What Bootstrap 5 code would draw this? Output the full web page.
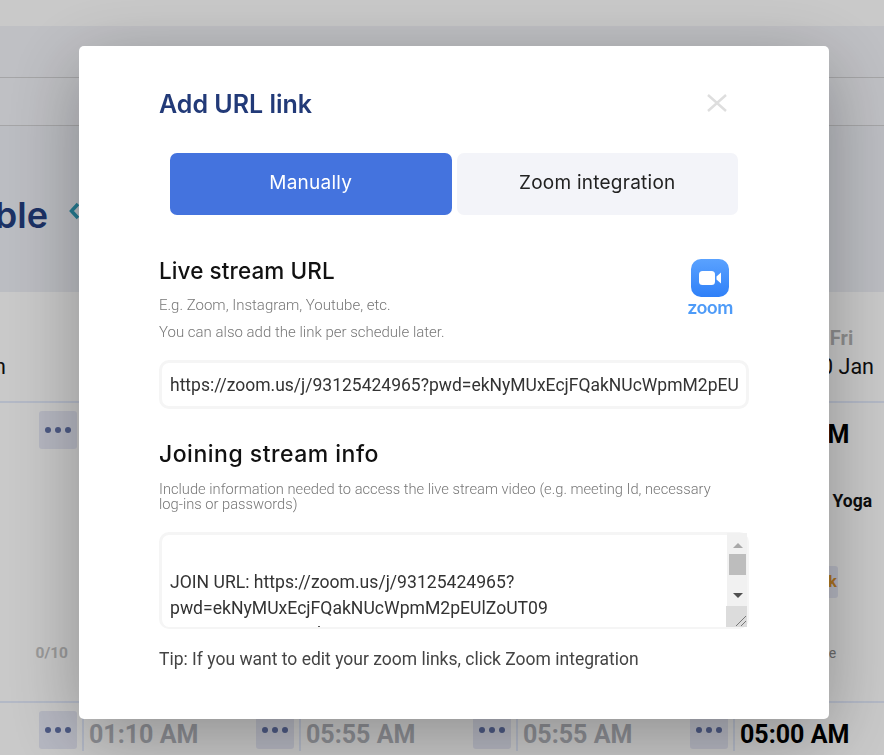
<!DOCTYPE html>
<html lang="en">
<head>
    <meta charset="UTF-8">
    <title>Add URL link</title>
    <link href="https://cdn.jsdelivr.net/npm/bootstrap@5.3.0/dist/css/bootstrap.min.css" rel="stylesheet">
    <style>
        body { font-family: Roboto, sans-serif; overflow: hidden; height: 755px; background: #fff; }
        .wide-page { width: 1100px; margin-left: -135px; }
        .top-strip { height: 26px; background: #fff; }
        .band-a { height: 52px; background: #f3f4f9; border-bottom: 1px solid #d2d2d4; }
        .band-b { height: 48px; background: #f3f4f9; border-bottom: 1px solid #d2d2d4; }
        .title-band { height: 166px; background: #eef0f6; padding-top: 65px; }
        .page-title { width: 183px; font: 600 36px/48px Inter, sans-serif; color: #243f80; text-align: right; white-space: nowrap; overflow: hidden; direction: rtl; }
        .week-nav { margin: 11px 0 0 21px; }
        .head-row { height: 111px; border-bottom: 2px solid #e4ebfc; }
        .body-row { height: 300px; border-bottom: 2px solid #e4ebfc; }
        .cell-first { width: 217px; flex: none; }
        .cell-day { width: 217px; flex: none; padding-left: 5px; border-left: 2px solid #e4ebfc; }
        .head-cell { width: 217px; flex: none; padding-top: 33px; text-align: center; }
        .day-name { font: 700 20px/26px Roboto, sans-serif; color: #b5b5b5; min-height: 26px; }
        .day-date { font: 400 21.5px/30px Roboto, sans-serif; color: #111; margin-top: 1px; }
        .dots-btn { width: 38px; height: 38px; margin-top: 8px; background: #e7e9f6; border-radius: 3px; border: 0; padding: 0; gap: 4px; }
        .dots-btn i { width: 6px; height: 6px; border-radius: 50%; background: #6272a8; }
        .dots-slot { justify-content: flex-end; padding-right: 5px; }
        .time-text { font: 700 25px/32px Roboto, sans-serif; color: #b4b6bd; }
        .time-now { color: #000; }
        .spots-text { font: 700 15.5px/18px Roboto, sans-serif; color: #c4c4c4; margin: 195px 14px 0 0; text-align: right; }
        .class-name { font: 700 17.5px/20px Roboto, sans-serif; color: #111; margin: 40px 0 0 60px; white-space: nowrap; }
        .book-chip { width: fit-content; background: #e7e9f6; color: #d9902a; font: 700 16px/32px Roboto, sans-serif; padding: 0 1px 0 4px; border-radius: 3px; margin: 55px 0 0 56px; }
        .note-text { font-size: 14px; line-height: 21px; color: #888; margin: 45px 0 0 40px; }

        .modal-backdrop { --bs-backdrop-opacity: .21; }
        .url-dialog { --bs-modal-width: 750px; margin: 46px 0 0 79px; }
        .url-box { height: 673px; border: 0; border-radius: 5px; padding: 42px 80px 0; box-shadow: 0 18px 75px rgba(0,0,0,.3); }
        .url-title { font: 600 25px/32px Inter, sans-serif; color: #223a78; margin: 0; }
        .url-close { width: 20px; height: 18px; margin: 6px 22px 0 0; background: none; border: 0; padding: 0; }
        .tab-row { gap: 5px; margin: 33px 11px 0; }
        .tab-btn { flex: 1; height: 62px; border: 0; border-radius: 7px; font: 400 19px/24px Inter, sans-serif; letter-spacing: .25px; padding-bottom: 4px; }
        .tab-on { background: #4473de; color: #fff; }
        .tab-off { background: #f3f4f9; color: #222; }
        .sec-title { font: 500 22.5px/30px Inter, sans-serif; color: #111; margin: 0; letter-spacing: .1px; }
        .sec-wide { font-size: 23px; letter-spacing: .5px; margin-top: 30px; }
        .live-block { padding-top: 17px; }
        .help-text { font-size: 15px; line-height: 21px; font-weight: 300; color: #777; margin: 6px 0 0; }
        .help-first { margin-top: 9px; }
        .help-tight { font-size: 14.7px; line-height: 15px; margin-top: 13px; }
        .zoom-logo { width: 46px; margin-right: 16px; padding-top: 20px; }
        .zoom-word { font: 600 18px/17px Inter, sans-serif; color: #4e9bf8; letter-spacing: -.6px; margin-top: 2px; }
        .url-input, .url-input:focus { height: 49px; border: 3px solid #f5f5f5; border-radius: 10px; font: 400 17.5px/26px Roboto, sans-serif; color: #333; padding: 0 7px 0 8px; margin-top: 17px; box-shadow: none; }
        .area-wrap { margin-top: 20px; }
        .url-area, .url-area:focus { height: 97px; border: 3px solid #f5f5f5; border-bottom-width: 2px; border-radius: 10px; font: 400 17.6px/26px Roboto, sans-serif; color: #333; padding: 0 28px 0 8px; box-shadow: none; resize: none; overflow: hidden; }
        .area-bar { position: absolute; top: 1px; right: 2px; }
        .tip-text { font-size: 17.5px; line-height: 24px; color: #444; margin: 18px 0 0; }
    </style>
</head>
<body>
<div class="wide-page">
    <div class="top-strip"></div>
    <div class="band-a"></div>
    <div class="band-b"></div>
    <div class="title-band d-flex">
        <div class="page-title">Timetable</div>
        <svg class="week-nav" width="20" height="20" viewBox="0 0 20 20"><path d="M9 2 2.5 9 9 16" fill="none" stroke="#2f9cb8" stroke-width="3.5"/></svg>
    </div>
    <div class="head-row d-flex">
        <div class="head-cell"><div class="day-name"></div><div class="day-date">26 Jan</div></div>
        <div class="head-cell"></div>
        <div class="head-cell"></div>
        <div class="head-cell"></div>
        <div class="head-cell"><div class="day-name">Fri</div><div class="day-date">30 Jan</div></div>
    </div>
    <div class="body-row d-flex">
        <div class="cell-first">
            <div class="d-flex dots-slot"><button class="dots-btn d-flex align-items-center justify-content-center" type="button"><i></i><i></i><i></i></button></div>
            <div class="spots-text">0/10</div>
        </div>
        <div class="cell-day"></div>
        <div class="cell-day"></div>
        <div class="cell-day"></div>
        <div class="cell-day">
            <div class="time-text time-now mt-3">05:00 AM</div>
            <div class="class-name">Hot Yoga</div>
            <div class="book-chip">Book</div>
            <div class="note-text">Available</div>
        </div>
    </div>
    <div class="d-flex">
        <div class="cell-first d-flex dots-slot"><button class="dots-btn d-flex align-items-center justify-content-center" type="button"><i></i><i></i><i></i></button></div>
        <div class="cell-day d-flex justify-content-between"><div class="time-text pt-3">01:10 AM</div><div class="d-flex dots-slot"><button class="dots-btn d-flex align-items-center justify-content-center" type="button"><i></i><i></i><i></i></button></div></div>
        <div class="cell-day d-flex justify-content-between"><div class="time-text pt-3">05:55 AM</div><div class="d-flex dots-slot"><button class="dots-btn d-flex align-items-center justify-content-center" type="button"><i></i><i></i><i></i></button></div></div>
        <div class="cell-day d-flex justify-content-between"><div class="time-text pt-3">05:55 AM</div><div class="d-flex dots-slot"><button class="dots-btn d-flex align-items-center justify-content-center" type="button"><i></i><i></i><i></i></button></div></div>
        <div class="cell-day"><div class="time-text time-now pt-3">05:00 AM</div></div>
    </div>
</div>

<div class="modal-backdrop show"></div>
<div class="modal d-block">
    <div class="modal-dialog url-dialog">
        <div class="modal-content url-box">
            <div class="d-flex justify-content-between">
                <h2 class="url-title">Add URL link</h2>
                <button class="url-close" type="button" aria-label="Close">
                    <svg class="d-block" width="20" height="18" viewBox="0 0 20 18"><path d="M1 1 19 17M19 1 1 17" stroke="#dedede" stroke-width="2.4"/></svg>
                </button>
            </div>
            <div class="d-flex tab-row">
                <button class="tab-btn tab-on" type="button">Manually</button>
                <button class="tab-btn tab-off" type="button">Zoom integration</button>
            </div>
            <div class="d-flex justify-content-between mt-4">
                <div class="live-block">
                    <h3 class="sec-title">Live stream URL</h3>
                    <p class="help-text help-first">E.g. Zoom, Instagram, Youtube, etc.</p>
                    <p class="help-text">You can also add the link per schedule later.</p>
                </div>
                <div class="zoom-logo d-flex flex-column align-items-center">
                    <svg width="38" height="38" viewBox="0 0 38 38">
                        <defs><linearGradient id="zoomFill" x1="0" y1="0" x2="0" y2="1"><stop offset="0" stop-color="#5aa2ff"/><stop offset="1" stop-color="#2f80f8"/></linearGradient></defs>
                        <rect width="38" height="38" rx="10" fill="url(#zoomFill)"/>
                        <rect x="8" y="12" width="16" height="14" rx="3.5" fill="#fff"/>
                        <path d="M25.5 17.5 30 13.5V24.5L25.5 20.5Z" fill="#fff"/>
                    </svg>
                    <div class="zoom-word">zoom</div>
                </div>
            </div>
            <input class="form-control url-input" type="text" value="https://zoom.us/j/93125424965?pwd=ekNyMUxEcjFQakNUcWpmM2pEUlZoUT09">
            <h3 class="sec-title sec-wide">Joining stream info</h3>
            <p class="help-text help-tight">Include information needed to access the live stream video (e.g. meeting Id, necessary<br>log-ins or passwords)</p>
            <div class="area-wrap position-relative">
                <textarea class="form-control url-area" id="joinInfo" spellcheck="false">


JOIN URL: https://zoom.us/j/93125424965?pwd=ekNyMUxEcjFQakNUcWpmM2pEUlZoUT09
PASSWORD: ZmxVbe

</textarea>
                <!-- the sandbox browser hides native scrollbars, so it is drawn on top -->
                <svg class="area-bar d-block" width="21" height="94" viewBox="0 0 21 94">
                    <rect x="1" width="20" height="73" fill="#f1f1f1"/>
                    <path d="M12 10 17 15H7Z" fill="#a9a9a9"/>
                    <rect x="3" y="21" width="17" height="21" fill="#bdbdbd"/>
                    <path d="M7 60H17L12 65Z" fill="#505050"/>
                    <rect y="73" width="21" height="21" fill="#dcdcdc"/>
                    <path d="M10 93 20 83M15 93 20 88" stroke="#777" fill="none"/>
                </svg>
            </div>
            <p class="tip-text">Tip: If you want to edit your zoom links, click Zoom integration</p>
        </div>
    </div>
</div>

<script src="https://cdn.jsdelivr.net/npm/bootstrap@5.3.0/dist/js/bootstrap.bundle.min.js"></script>
<script>
document.getElementById("joinInfo").scrollTop = 18;
</script>
</body>
</html>
